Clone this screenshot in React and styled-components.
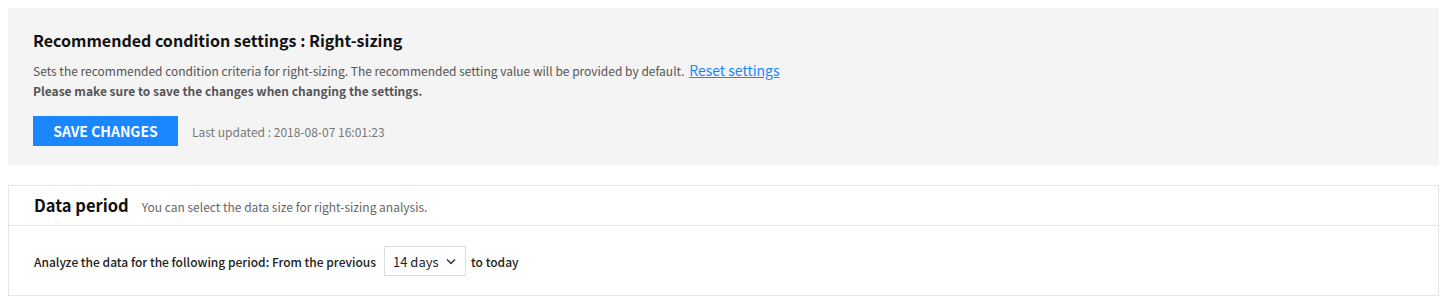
import React from 'react';
import styled, { createGlobalStyle } from 'styled-components';

const GlobalStyle = createGlobalStyle`
  body {
    margin: 8px;
    background: #fff;
    font-family: 'Noto Sans CJK KR', 'Noto Sans', sans-serif;
    color: #222;
  }
`;

const Page = styled.div`
  display: flex;
  flex-direction: column;
  gap: 20px;
`;

const IntroPanel = styled.section`
  background-color: #f4f4f4;
  padding: 19px 25px 20px;
  height: 157px;
  box-sizing: border-box;
`;

const IntroTitle = styled.h2`
  margin: 0 0 7px;
  font-size: 16px;
  font-weight: 700;
  color: #111;
  line-height: 26px;
`;

const Desc = styled.p`
  margin: 0;
  font-size: 12px;
  line-height: 20px;
  color: #555;
  font-weight: ${(p) => (p.$bold ? 700 : 400)};
`;

const ResetLink = styled.a`
  color: #1a87ff;
  font-size: 14px;
  margin-left: 2px;
  text-decoration: underline;
  cursor: pointer;
`;

const ActionRow = styled.div`
  display: flex;
  align-items: center;
  gap: 14px;
  margin-top: 15px;
`;

const SaveButton = styled.button`
  width: 145px;
  height: 30px;
  border: none;
  background-color: #1a87ff;
  color: #fff;
  font-family: inherit;
  font-size: 14px;
  font-weight: 700;
  padding: 0;
  cursor: pointer;
`;

const Updated = styled.span`
  font-size: 12px;
  color: #777;
`;

const Card = styled.section`
  background: #fff;
  border: 1px solid #e6e6e6;
  box-shadow: 0 1px 2px rgba(0, 0, 0, 0.08);
`;

const CardHeader = styled.header`
  display: flex;
  align-items: baseline;
  gap: 13px;
  padding: 8px 25px 9px;
  border-bottom: 1px solid #e6e6e6;
`;

const CardTitle = styled.h3`
  margin: 0;
  font-size: 16.5px;
  font-weight: 700;
  color: #111;
  line-height: 22px;
`;

const CardSub = styled.span`
  font-size: 12px;
  color: #666;
`;

const CardBody = styled.div`
  display: flex;
  align-items: center;
  gap: 6px;
  padding: 20px 25px 19px;
  font-size: 12px;
  font-weight: 500;
  color: #222;
`;

const SelectBox = styled.div`
  display: flex;
  align-items: center;
  justify-content: space-between;
  width: 82px;
  height: 30px;
  box-sizing: border-box;
  border: 1px solid #ddd;
  padding: 0 9px 0 8px;
  font-weight: 400;
  font-size: 13px;
  color: #222;
  margin-left: 2px;
  margin-right: -1px;
`;

const Chevron = () => (
  <svg width="10" height="7" viewBox="0 0 10 7" fill="none">
    <path d="M1 1.5L5 5.5L9 1.5" stroke="#333" strokeWidth="1.5" />
  </svg>
);

export default function App() {
  return (
    <>
      <GlobalStyle />
      <Page>
        <IntroPanel>
          <IntroTitle>Recommended condition settings : Right-sizing</IntroTitle>
          <Desc>
            Sets the recommended condition criteria for right-sizing. The recommended setting value will be provided by default.{' '}
            <ResetLink>Reset settings</ResetLink>
          </Desc>
          <Desc $bold>Please make sure to save the changes when changing the settings.</Desc>
          <ActionRow>
            <SaveButton>SAVE CHANGES</SaveButton>
            <Updated>Last updated : 2018-08-07 16:01:23</Updated>
          </ActionRow>
        </IntroPanel>
        <Card>
          <CardHeader>
            <CardTitle>Data period</CardTitle>
            <CardSub>You can select the data size for right-sizing analysis.</CardSub>
          </CardHeader>
          <CardBody>
            Analyze the data for the following period: From the previous
            <SelectBox>
              14 days <Chevron />
            </SelectBox>
            to today
          </CardBody>
        </Card>
      </Page>
    </>
  );
}
